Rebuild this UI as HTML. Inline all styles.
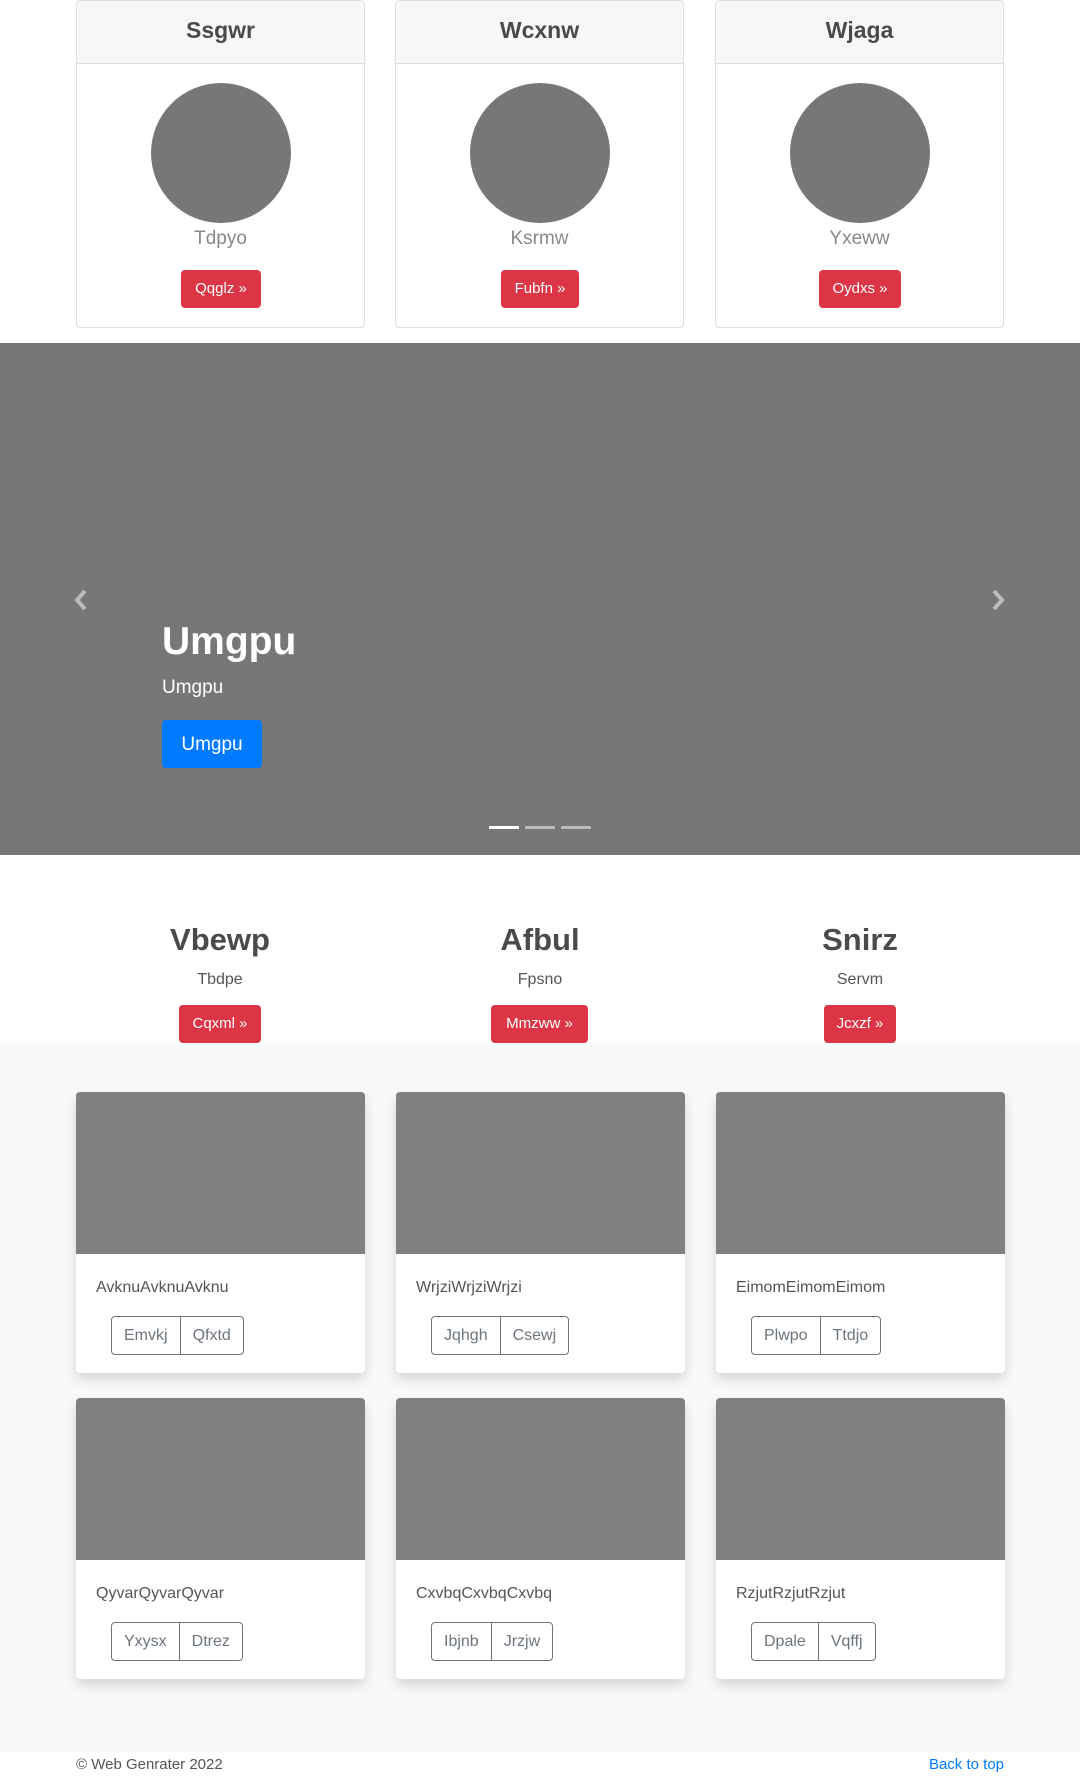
<!DOCTYPE html>
<html><head><style>
*{box-sizing:border-box;margin:0;padding:0}
body{width:1080px;height:1776px;font-family:"Liberation Sans",sans-serif;color:#212529;background:#fff;position:relative;overflow:hidden}
.abs{position:absolute}
.tc{border:1px solid #dfdfdf;border-radius:4px;width:289px;height:328px;top:0;background:#fff;overflow:hidden}
.tc .h{height:63px;background:#f7f7f7;border-bottom:1px solid #dfdfdf;text-align:center;font-size:23px;font-weight:bold;color:#4a4a4a;line-height:58px}
.tc .c{position:absolute;left:74px;top:82px;width:140px;height:140px;border-radius:50%;background:#777}
.tc .n{position:absolute;top:227px;width:100%;text-align:center;font-size:19px;color:#888;font-weight:300}
.rb{background:#dc3545;color:#fff;font-size:15px;border-radius:4px;text-align:center;line-height:38px;height:38px}
.car{left:0;top:343px;width:1080px;height:512px;background:#777}
.fe{text-align:center;width:300px}
.fe h2{font-size:31px;color:#4a4a4a;font-weight:bold}
.fe p{font-size:16px;color:#555;margin-top:13px}
.gray{left:0;top:1043px;width:1080px;height:709px;background:#f8f9fa}
.ac{width:289px;height:281px;background:#fff;border-radius:4px;box-shadow:0 6px 12px rgba(0,0,0,.15);overflow:hidden}
.ac .im{height:162px;background:#808080}
.ac .t{position:absolute;left:20px;top:187px;font-size:16px;color:#555}
.ac .bg{position:absolute;left:35px;top:224px;height:39px;border:1px solid #6c757d;border-radius:4px;display:flex;font-size:16px;color:#6c757d;line-height:37px}
.ac .bg span{padding:0 12px}
.ac .bg span+span{border-left:1px solid #6c757d}
</style></head><body>
<div class="abs tc" style="left:76px"><div class="h">Ssgwr</div><div class="c"></div><div class="n">Tdpyo</div><div class="abs rb" style="left:104px;top:269px;width:80px">Qqglz »</div></div>
<div class="abs tc" style="left:395px"><div class="h">Wcxnw</div><div class="c"></div><div class="n">Ksrmw</div><div class="abs rb" style="left:105px;top:269px;width:78px">Fubfn »</div></div>
<div class="abs tc" style="left:715px"><div class="h">Wjaga</div><div class="c"></div><div class="n">Yxeww</div><div class="abs rb" style="left:103px;top:269px;width:82px">Oydxs »</div></div>

<div class="abs car">
<svg class="abs" style="left:73px;top:246px" width="16" height="22" viewBox="0 0 16 22"><path d="M12 2 L4 11 L12 20" stroke="#bbb" stroke-width="4" fill="none"/></svg>
<svg class="abs" style="left:990px;top:246px" width="16" height="22" viewBox="0 0 16 22"><path d="M4 2 L12 11 L4 20" stroke="#bbb" stroke-width="4" fill="none"/></svg>
<div class="abs" style="left:162px;top:277px;font-size:39px;font-weight:bold;color:#fff">Umgpu</div>
<div class="abs" style="left:162px;top:334px;font-size:19px;color:#fff">Umgpu</div>
<div class="abs" style="left:162px;top:377px;width:100px;height:48px;background:#007bff;border-radius:4px;color:#fff;font-size:19px;text-align:center;line-height:50px">Umgpu</div>
<div class="abs" style="left:489px;top:483px;width:30px;height:3px;background:#fff"></div>
<div class="abs" style="left:525px;top:483px;width:30px;height:3px;background:#bbb"></div>
<div class="abs" style="left:561px;top:483px;width:30px;height:3px;background:#bbb"></div>
</div>

<div class="abs fe" style="left:70px;top:922px"><h2>Vbewp</h2><p>Tbdpe</p></div>
<div class="abs fe" style="left:390px;top:922px"><h2>Afbul</h2><p>Fpsno</p></div>
<div class="abs fe" style="left:710px;top:922px"><h2>Snirz</h2><p>Servm</p></div>
<div class="abs rb" style="left:179px;top:1005px;width:82px">Cqxml »</div>
<div class="abs rb" style="left:491px;top:1005px;width:97px">Mmzww »</div>
<div class="abs rb" style="left:824px;top:1005px;width:72px">Jcxzf »</div>

<div class="abs gray"></div>
<div class="abs ac" style="left:76px;top:1092px"><div class="im"></div><div class="t">AvknuAvknuAvknu</div><div class="bg"><span>Emvkj</span><span>Qfxtd</span></div></div>
<div class="abs ac" style="left:396px;top:1092px"><div class="im"></div><div class="t">WrjziWrjziWrjzi</div><div class="bg"><span>Jqhgh</span><span>Csewj</span></div></div>
<div class="abs ac" style="left:716px;top:1092px"><div class="im"></div><div class="t">EimomEimomEimom</div><div class="bg"><span>Plwpo</span><span>Ttdjo</span></div></div>
<div class="abs ac" style="left:76px;top:1398px"><div class="im"></div><div class="t">QyvarQyvarQyvar</div><div class="bg"><span>Yxysx</span><span>Dtrez</span></div></div>
<div class="abs ac" style="left:396px;top:1398px"><div class="im"></div><div class="t">CxvbqCxvbqCxvbq</div><div class="bg"><span>Ibjnb</span><span>Jrzjw</span></div></div>
<div class="abs ac" style="left:716px;top:1398px"><div class="im"></div><div class="t">RzjutRzjutRzjut</div><div class="bg"><span>Dpale</span><span>Vqffj</span></div></div>

<div class="abs" style="left:76px;top:1756px;font-size:15px;color:#555">© Web Genrater 2022</div>
<div class="abs" style="right:76px;top:1756px;font-size:15px;color:#007bff">Back to top</div>
</body></html>
